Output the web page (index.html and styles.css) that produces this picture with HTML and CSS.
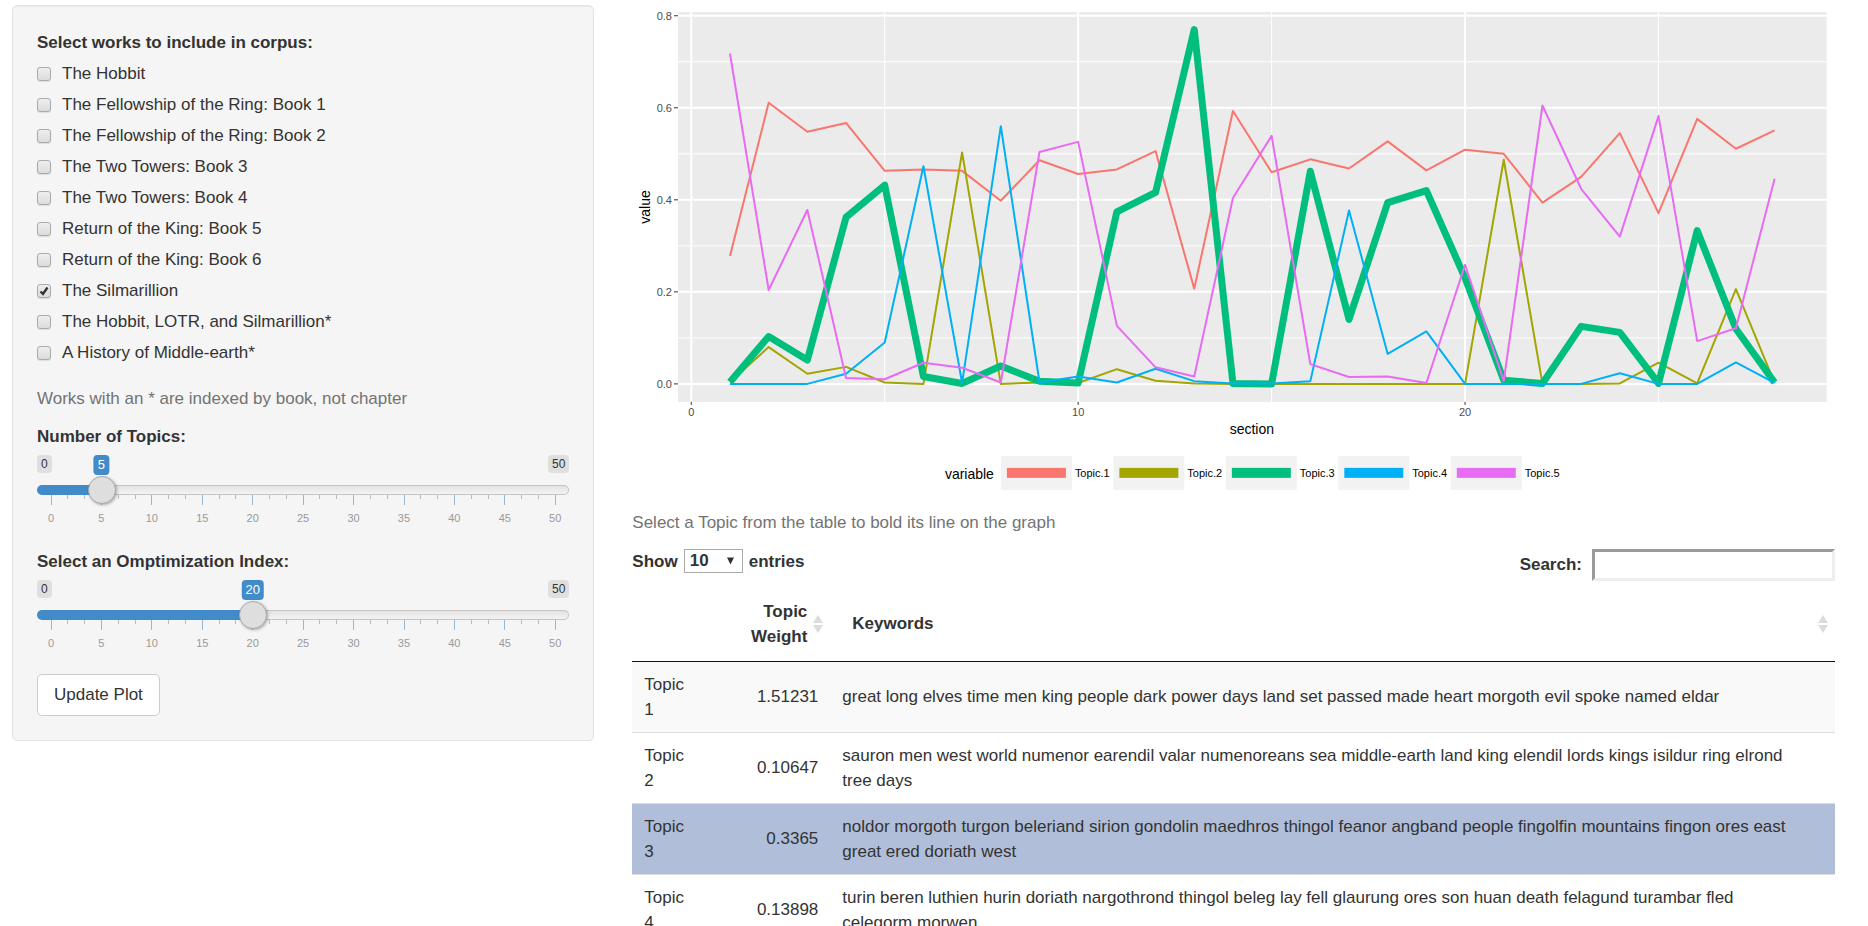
FILE: index.html
```html
<!DOCTYPE html>
<html lang="en">
<head>
    <meta charset="UTF-8">
    <meta name="viewport" content="width=device-width, initial-scale=1.0">
    <title>Tolkien Topic Model</title>
    <link rel="stylesheet" href="styles.css">
</head>
<body>

    <div class="row">
        <div class="sidebar">
            <form class="well">
                <fieldset class="works">
                    <legend>Select works to include in corpus:</legend>
                    <label><input type="checkbox"> The Hobbit</label>
                    <label><input type="checkbox"> The Fellowship of the Ring: Book 1</label>
                    <label><input type="checkbox"> The Fellowship of the Ring: Book 2</label>
                    <label><input type="checkbox"> The Two Towers: Book 3</label>
                    <label><input type="checkbox"> The Two Towers: Book 4</label>
                    <label><input type="checkbox"> Return of the King: Book 5</label>
                    <label><input type="checkbox"> Return of the King: Book 6</label>
                    <label><input type="checkbox" checked> The Silmarillion</label>
                    <label><input type="checkbox"> The Hobbit, LOTR, and Silmarillion*</label>
                    <label><input type="checkbox"> A History of Middle-earth*</label>
                </fieldset>

                <p class="help-text works-note">Works with an * are indexed by book, not chapter</p>

                <div class="slider">
                    <label class="control-label" for="topics">Number of Topics:</label>
                    <div class="slider-top">
                        <span class="limit">0</span>
                        <output class="current" for="topics">5</output>
                        <span class="limit">50</span>
                    </div>
                    <input type="range" id="topics" min="0" max="50" value="5">
                    <svg class="ticks" viewBox="0 0 300 10" preserveAspectRatio="none" aria-hidden="true"></svg>
                    <div class="tick-labels"></div>
                </div>

                <div class="slider">
                    <label class="control-label" for="optimize">Select an Omptimization Index:</label>
                    <div class="slider-top">
                        <span class="limit">0</span>
                        <output class="current" for="optimize">20</output>
                        <span class="limit">50</span>
                    </div>
                    <input type="range" id="optimize" min="0" max="50" value="20">
                    <svg class="ticks" viewBox="0 0 300 10" preserveAspectRatio="none" aria-hidden="true"></svg>
                    <div class="tick-labels"></div>
                </div>

                <button type="button" class="btn">Update Plot</button>
            </form>
        </div>

        <div class="main">
            <svg id="plot" class="plot" viewBox="0 0 1203 500" role="img" aria-label="Topic value by section"></svg>

            <p class="help-text">Select a Topic from the table to bold its line on the graph</p>

            <div class="table-controls">
                <label class="length">Show
                    <select>
                        <option selected>10</option>
                        <option>25</option>
                        <option>50</option>
                        <option>100</option>
                    </select>
                    entries
                </label>
                <label class="search">Search: <input type="search"></label>
            </div>

            <table class="topics">
                <colgroup>
                    <col class="col-topic">
                    <col class="col-weight">
                    <col>
                </colgroup>
                <thead>
                    <tr>
                        <td></td>
                        <th scope="col">
                            <div class="heading right">
                                <span>Topic Weight</span>
                                <svg class="sort" viewBox="0 0 10 18"><path d="M5 0L10 8H0zM5 18L0 10H10z"/></svg>
                            </div>
                        </th>
                        <th scope="col">
                            <div class="heading">
                                <span>Keywords</span>
                                <svg class="sort" viewBox="0 0 10 18"><path d="M5 0L10 8H0zM5 18L0 10H10z"/></svg>
                            </div>
                        </th>
                    </tr>
                </thead>
                <tbody>
                    <tr class="odd">
                        <td>Topic 1</td>
                        <td class="weight">1.51231</td>
                        <td class="keywords">great long elves time men king people dark power days land set passed made heart morgoth evil spoke named eldar</td>
                    </tr>
                    <tr>
                        <td>Topic 2</td>
                        <td class="weight">0.10647</td>
                        <td class="keywords">sauron men west world numenor earendil valar numenoreans sea middle-earth land king elendil lords kings isildur ring elrond tree days</td>
                    </tr>
                    <tr class="selected">
                        <td>Topic 3</td>
                        <td class="weight">0.3365</td>
                        <td class="keywords">noldor morgoth turgon beleriand sirion gondolin maedhros thingol feanor angband people fingolfin mountains fingon ores east great ered doriath west</td>
                    </tr>
                    <tr>
                        <td>Topic 4</td>
                        <td class="weight">0.13898</td>
                        <td class="keywords">turin beren luthien hurin doriath nargothrond thingol beleg lay fell glaurung ores son huan death felagund turambar fled celegorm morwen</td>
                    </tr>
                </tbody>
            </table>
        </div>
    </div>

    <script>
        const topics = [
            { name: 'Topic.1', color: '#f8766d', values: [.278, .611, .548, .567, .463, .466, .463, .398, .486, .456, .466, .506, .207, .593, .46, .488, .468, .527, .464, .509, .5, .394, .45, .545, .371, .576, .511, .551] },
            { name: 'Topic.2', color: '#a3a500', values: [.004, .08, .022, .037, .003, 0, .503, 0, .003, .002, .032, .007, .001, 0, 0, 0, 0, 0, 0, 0, .487, 0, 0, .001, .046, .001, .206, .002] },
            { name: 'Topic.3', color: '#00bf7d', bold: true, values: [.004, .103, .052, .362, .432, .016, .001, .039, .006, .002, .374, .416, .77, .001, 0, .462, .14, .394, .42, .23, .008, .001, .125, .112, .001, .333, .12, .003] },
            { name: 'Topic.4', color: '#00b0f6', values: [0, 0, 0, .022, .09, .473, .002, .56, .003, .016, .003, .033, .006, .001, .001, .006, .377, .065, .114, 0, 0, 0, 0, .023, 0, 0, .047, .002] },
            { name: 'Topic.5', color: '#e76bf3', values: [.718, .204, .378, .013, .01, .046, .035, .003, .504, .526, .126, .036, .016, .404, .539, .043, .015, .016, .002, .259, .006, .605, .424, .32, .582, .093, .121, .446] }
        ];

        const panel = { left: 46, right: 1195, top: 7, bottom: 397 };
        const x = section => 59.3 + section * 38.7;
        const y = value => 379 - value * 460.3;

        function hLine(value, cls) {
            return `<line class="${cls}" x1="${panel.left}" x2="${panel.right}" y1="${y(value)}" y2="${y(value)}"/>`;
        }

        function vLine(section, cls) {
            return `<line class="${cls}" x1="${x(section)}" x2="${x(section)}" y1="${panel.top}" y2="${panel.bottom}"/>`;
        }

        function drawPlot() {
            let out = `<rect class="panel" x="${panel.left}" y="${panel.top}" width="${panel.right - panel.left}" height="${panel.bottom - panel.top}"/>`;

            [.1, .3, .5, .7].forEach(v => out += hLine(v, 'minor'));
            [5, 15, 25].forEach(s => out += vLine(s, 'minor'));

            [0, .2, .4, .6, .8].forEach(v => {
                out += hLine(v, 'major');
                out += `<line class="axis-tick" x1="42" x2="${panel.left}" y1="${y(v)}" y2="${y(v)}"/>`;
                out += `<text class="axis-text" x="40" y="${y(v) + 4}" text-anchor="end">${v.toFixed(1)}</text>`;
            });
            [0, 10, 20].forEach(s => {
                out += vLine(s, 'major');
                out += `<line class="axis-tick" x1="${x(s)}" x2="${x(s)}" y1="${panel.bottom}" y2="400"/>`;
                out += `<text class="axis-text" x="${x(s)}" y="411" text-anchor="middle">${s}</text>`;
            });

            topics.forEach(t => {
                const points = t.values.map((v, i) => `${x(i + 1)},${y(v)}`).join(' ');
                out += `<polyline class="series${t.bold ? ' bold' : ''}" stroke="${t.color}" points="${points}"/>`;
            });

            out += '<text class="axis-title" x="620" y="429" text-anchor="middle">section</text>';
            out += '<text class="axis-title" transform="translate(18 202) rotate(-90)" text-anchor="middle">value</text>';

            // legend
            out += '<text class="axis-title" x="313" y="474">variable</text>';
            topics.forEach((t, i) => {
                const left = 369 + i * 112.5;
                out += `<rect class="key" x="${left}" y="451" width="71" height="34"/>`;
                out += `<rect fill="${t.color}" x="${left + 6}" y="463" width="59" height="10"/>`;
                out += `<text class="legend-text" x="${left + 74}" y="472">${t.name}</text>`;
            });

            document.getElementById('plot').innerHTML = out;
        }

        function setupSlider(slider) {
            const input = slider.querySelector('input');
            const current = slider.querySelector('.current');

            // two short ticks between each pair of labelled ones
            let major = '', minor = '';
            for (let i = 0; i <= 30; i++) {
                if (i % 3 === 0) major += `M${i * 10} 0V10`;
                else minor += `M${i * 10} 0V4`;
            }
            slider.querySelector('.ticks').innerHTML = `<path class="tick-major" d="${major}"/><path class="tick-minor" d="${minor}"/>`;

            const labels = slider.querySelector('.tick-labels');
            for (let n = 0; n <= 50; n += 5) {
                labels.innerHTML += `<span>${n}</span>`;
            }

            function update() {
                slider.style.setProperty('--pos', input.value / input.max);
                current.textContent = input.value;
            }
            input.addEventListener('input', update);
            update();
        }

        drawPlot();
        document.querySelectorAll('.slider').forEach(setupSlider);
    </script>
</body>
</html>
```
FILE: styles.css
```css
* {
    box-sizing: border-box;
}

body {
    margin: 0;
    padding: 5px 33px 0 12px;
    font-family: "Liberation Sans", Arial, sans-serif;
    font-size: 17px;
    line-height: 25px;
    color: #333;
    background: #fff;
}

p {
    margin: 0;
}

.row {
    display: grid;
    grid-template-columns: minmax(0, 1fr) minmax(0, 2fr);
    align-items: start;
    margin: 0 -19px;
}

.sidebar,
.main {
    padding: 0 19px;
}

.well {
    padding: 24px;
    background: #f5f5f5;
    border: 1px solid #e3e3e3;
    border-radius: 5px;
    box-shadow: inset 0 1px 1px rgba(0, 0, 0, 0.05);
}

.help-text {
    color: #737373;
}

/* checkboxes */
.works {
    display: flex;
    flex-direction: column;
    gap: 6px;
    margin: 0;
    padding: 0;
    border: 0;
}

.works legend {
    margin-bottom: 6px;
    padding: 0;
    font-weight: bold;
}

.works label {
    display: flex;
    align-items: center;
    gap: 11px;
}

.works input {
    appearance: none;
    width: 14px;
    height: 14px;
    margin: 0;
    border: 1px solid #aaa;
    border-radius: 3px;
    background: linear-gradient(#eee, #dcdcdc);
    box-shadow: 0 1px 1px rgba(0, 0, 0, 0.1);
}

.works input:checked {
    background: url("data:image/svg+xml,%3Csvg xmlns='http://www.w3.org/2000/svg' viewBox='0 0 12 12'%3E%3Cpath d='M2.5 6.5L5 9L9.5 2.5' fill='none' stroke='%23333' stroke-width='2.4'/%3E%3C/svg%3E") center / 12px no-repeat, linear-gradient(#eee, #dcdcdc);
}

.works-note {
    margin: 21px 0 13px;
}

/* sliders */
.slider {
    margin-bottom: 25px;
}

.control-label {
    display: block;
    margin-bottom: 6px;
    font-weight: bold;
}

.slider-top {
    position: relative;
    display: flex;
    justify-content: space-between;
    height: 20px;
    margin-bottom: 1px;
}

.limit {
    height: 18px;
    padding: 0 4px;
    font-size: 12px;
    line-height: 18px;
    background: #dfdfdf;
    border-radius: 4px;
}

.current {
    position: absolute;
    left: calc(14px + (100% - 28px) * var(--pos));
    height: 20px;
    padding: 0 4px;
    font-size: 13px;
    line-height: 20px;
    color: #fff;
    background: #428bca;
    border-radius: 4px;
    transform: translateX(-50%);
}

.slider input {
    --fill: calc(14px + (100% - 28px) * var(--pos));
    appearance: none;
    display: block;
    position: relative;
    z-index: 1;
    width: 100%;
    height: 28px;
    margin: 0;
    background: none;
}

/* the fill covers the track's border as well */
.slider input::-webkit-slider-runnable-track {
    height: 10px;
    border: 1px solid transparent;
    border-radius: 5px;
    background:
        linear-gradient(#428bca, #428bca) left / var(--fill) 100% no-repeat border-box,
        linear-gradient(#e3e3e3, #f3f3f3) padding-box,
        linear-gradient(#c4c4c4, #c4c4c4) border-box;
}

.slider input::-webkit-slider-thumb {
    appearance: none;
    width: 28px;
    height: 28px;
    margin-top: -10px;
    border: 1px solid #aaa;
    border-radius: 50%;
    background: #dedede;
    box-shadow: 1px 1px 3px rgba(0, 0, 0, 0.3);
}

.ticks {
    display: block;
    width: calc(100% - 28px);
    height: 10px;
    margin: -9px 14px 6px;
    overflow: visible;
}

.ticks path {
    vector-effect: non-scaling-stroke;
    shape-rendering: crispEdges;
}

.tick-major {
    stroke: #9bb8d1;
}

.tick-minor {
    stroke: #bbb;
}

.tick-labels {
    display: flex;
    justify-content: space-between;
    height: 13px;
    padding: 0 4px;
    font-size: 11px;
    line-height: 14px;
    color: #999;
}

.tick-labels span {
    width: 20px;
    text-align: center;
}

.btn {
    padding: 7px 16px;
    font: inherit;
    line-height: 26px;
    color: #333;
    background: #fff;
    border: 1px solid #ccc;
    border-radius: 5px;
    cursor: pointer;
}

/* plot */
.plot {
    display: block;
    width: 100%;
    margin-bottom: 5px;
}

.panel {
    fill: #ebebeb;
}

.major {
    stroke: #fff;
    stroke-width: 2;
}

.minor {
    stroke: #fff;
    stroke-width: 1;
}

.axis-tick {
    stroke: #333;
    stroke-width: 1;
}

.axis-text {
    font-size: 11px;
    fill: #4d4d4d;
}

.axis-title {
    font-size: 14px;
    fill: #000;
}

.legend-text {
    font-size: 11px;
    fill: #000;
}

.key {
    fill: #f2f2f2;
}

.series {
    fill: none;
    stroke-width: 2;
    stroke-linejoin: round;
}

.series.bold {
    stroke-width: 7;
}

/* table */
.table-controls {
    display: flex;
    justify-content: space-between;
    align-items: flex-start;
    margin: 14px 0 5px;
    font-weight: bold;
}

.length,
.search {
    display: flex;
    align-items: center;
    gap: 6px;
}

.length select {
    appearance: none;
    width: 59px;
    height: 24px;
    padding: 0 5px;
    font: inherit;
    line-height: 22px;
    color: inherit;
    border: 1px solid #a9a9a9;
    border-radius: 0;
    background: #fff url("data:image/svg+xml,%3Csvg xmlns='http://www.w3.org/2000/svg' viewBox='0 0 8 8'%3E%3Cpath d='M0 0H8L4 8z' fill='%23333'/%3E%3C/svg%3E") right 8px center / 7px 8px no-repeat;
}

.search {
    gap: 10px;
}

.search input {
    appearance: none;
    width: 243px;
    height: 32px;
    padding: 1px;
    font: inherit;
    font-weight: normal;
    border: 3px solid;
    border-color: #9a9a9a #eee #eee #9a9a9a;
    background: #fff;
}

.topics {
    width: 100%;
    table-layout: fixed;
    border-collapse: separate;
    border-spacing: 0;
}

.col-topic {
    width: 68px;
}

.col-weight {
    width: 130px;
}

.topics th,
.topics thead td {
    padding: 13px 7px 12px 22px;
    text-align: left;
    border-bottom: 1px solid #111;
}

.heading {
    display: flex;
    justify-content: space-between;
    align-items: center;
    gap: 6px;
}

.heading.right {
    text-align: right;
}

.sort {
    flex: none;
    width: 10px;
    height: 18px;
    fill: #dcdcdc;
}

.topics tbody td {
    padding: 10px 12px;
    border-top: 1px solid #ddd;
}

.topics tbody tr:first-child td {
    border-top: 0;
}

.topics tbody .weight {
    text-align: right;
}

.topics tbody .keywords {
    padding-right: 30px;
}

.odd {
    background: #f9f9f9;
}

.selected {
    background: #b0bed9;
}
```
